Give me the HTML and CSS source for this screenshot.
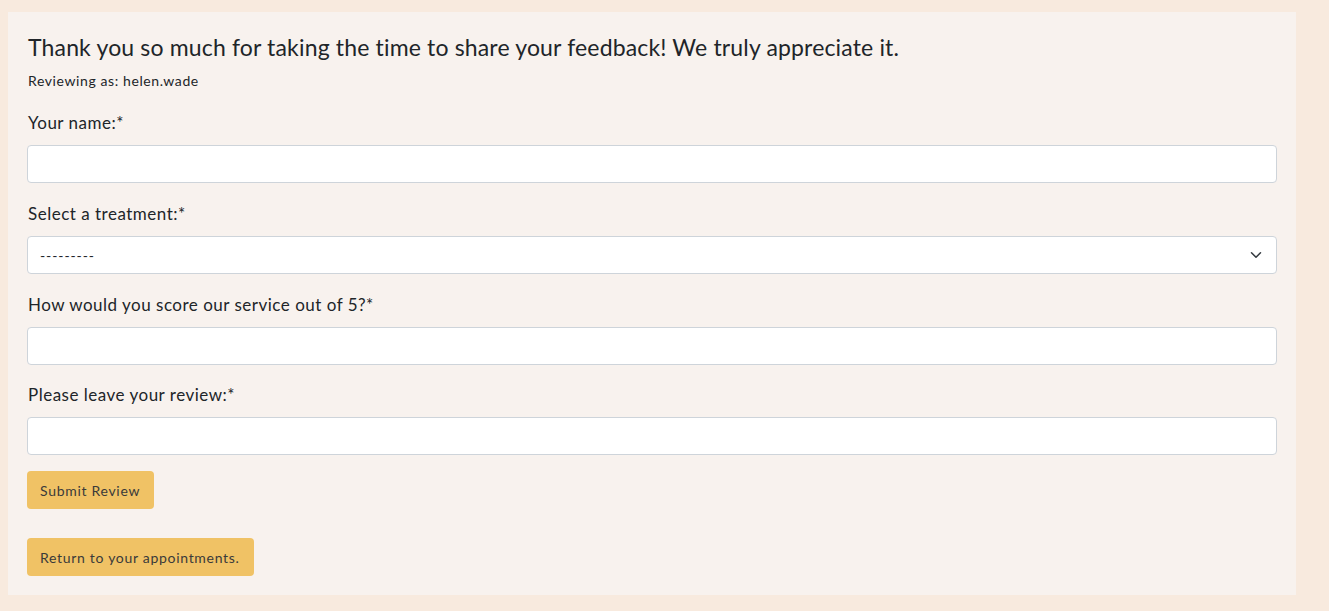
FILE: index.html
```html
<!DOCTYPE html>
<html lang="en">
<head>
<meta charset="utf-8">
<title>Leave a review</title>
<link rel="stylesheet" href="styles.css">
</head>
<body>
<main class="card">
  <h1 class="title">Thank you so much for taking the time to share your feedback! We truly appreciate it.</h1>
  <p class="reviewer">Reviewing as: helen.wade</p>
  <form class="form">
    <div class="group">
      <label class="label" for="name">Your name:*</label>
      <input class="control" id="name" type="text">
    </div>
    <div class="group">
      <label class="label" for="treatment">Select a treatment:*</label>
      <div class="select-wrap">
        <select class="control select" id="treatment">
          <option>---------</option>
        </select>
        <svg class="chevron" width="12" height="12" viewBox="0 0 16 16"><path d="M2 5l6 6 6-6" fill="none" stroke="#343a40" stroke-width="2" stroke-linecap="round" stroke-linejoin="round"/></svg>
      </div>
    </div>
    <div class="group tight">
      <label class="label" for="score">How would you score our service out of 5?*</label>
      <input class="control" id="score" type="text">
    </div>
    <div class="group last">
      <label class="label" for="review">Please leave your review:*</label>
      <input class="control" id="review" type="text">
    </div>
    <button class="btn" type="button">Submit Review</button>
  </form>
  <a class="btn btn-link" href="#">Return to your appointments.</a>
</main>
</body>
</html>
```
FILE: styles.css
```css
* { box-sizing: border-box; }
html, body { margin: 0; padding: 0; }
body {
  background: #f8eade;
  font-family: "Lato", "Open Sans", sans-serif;
  color: #212529;
  padding: 12px 33px 16px 8px;
}
.card {
  background: #f8f2ee;
  padding: 22px 19px 19px 19px;
  display: flex;
  flex-direction: column;
  align-items: flex-start;
}
.title {
  font-size: 23px;
  font-weight: 400;
  line-height: 26px;
  letter-spacing: 0.16px;
  margin: 0 0 10px 1px;
}
.reviewer {
  font-size: 14px;
  line-height: 21px;
  letter-spacing: 0.6px;
  margin: 0 0 19px 1px;
}
.form { width: 100%; display: flex; flex-direction: column; align-items: flex-start; }
.group { width: 100%; margin-bottom: 18px; }
.group.tight { margin-bottom: 17px; }
.group.last { margin-bottom: 16px; }
.label {
  display: block;
  font-size: 17px;
  line-height: 25px;
  letter-spacing: 0.5px;
  margin: 0 0 10px 1px;
}
.control {
  display: block;
  width: 100%;
  height: 38px;
  border: 1px solid #ced4da;
  border-radius: 4px;
  background: #fff;
  padding: 6px 12px;
  font-family: inherit;
  font-size: 14px;
  color: #212529;
}
.select { appearance: none; -webkit-appearance: none; letter-spacing: 0.9px; }
.select-wrap { position: relative; }
.chevron { position: absolute; right: 15px; top: 13px; pointer-events: none; }
.btn {
  display: inline-block;
  background: #f0c265;
  border: none;
  border-radius: 4px;
  height: 38px;
  padding: 1px 14px 0 13px;
  font-family: inherit;
  font-size: 14px;
  line-height: 37px;
  letter-spacing: 0.7px;
  color: #3a3a3a;
  text-decoration: none;
  cursor: pointer;
}
.btn-link { margin-top: 29px; }
```
